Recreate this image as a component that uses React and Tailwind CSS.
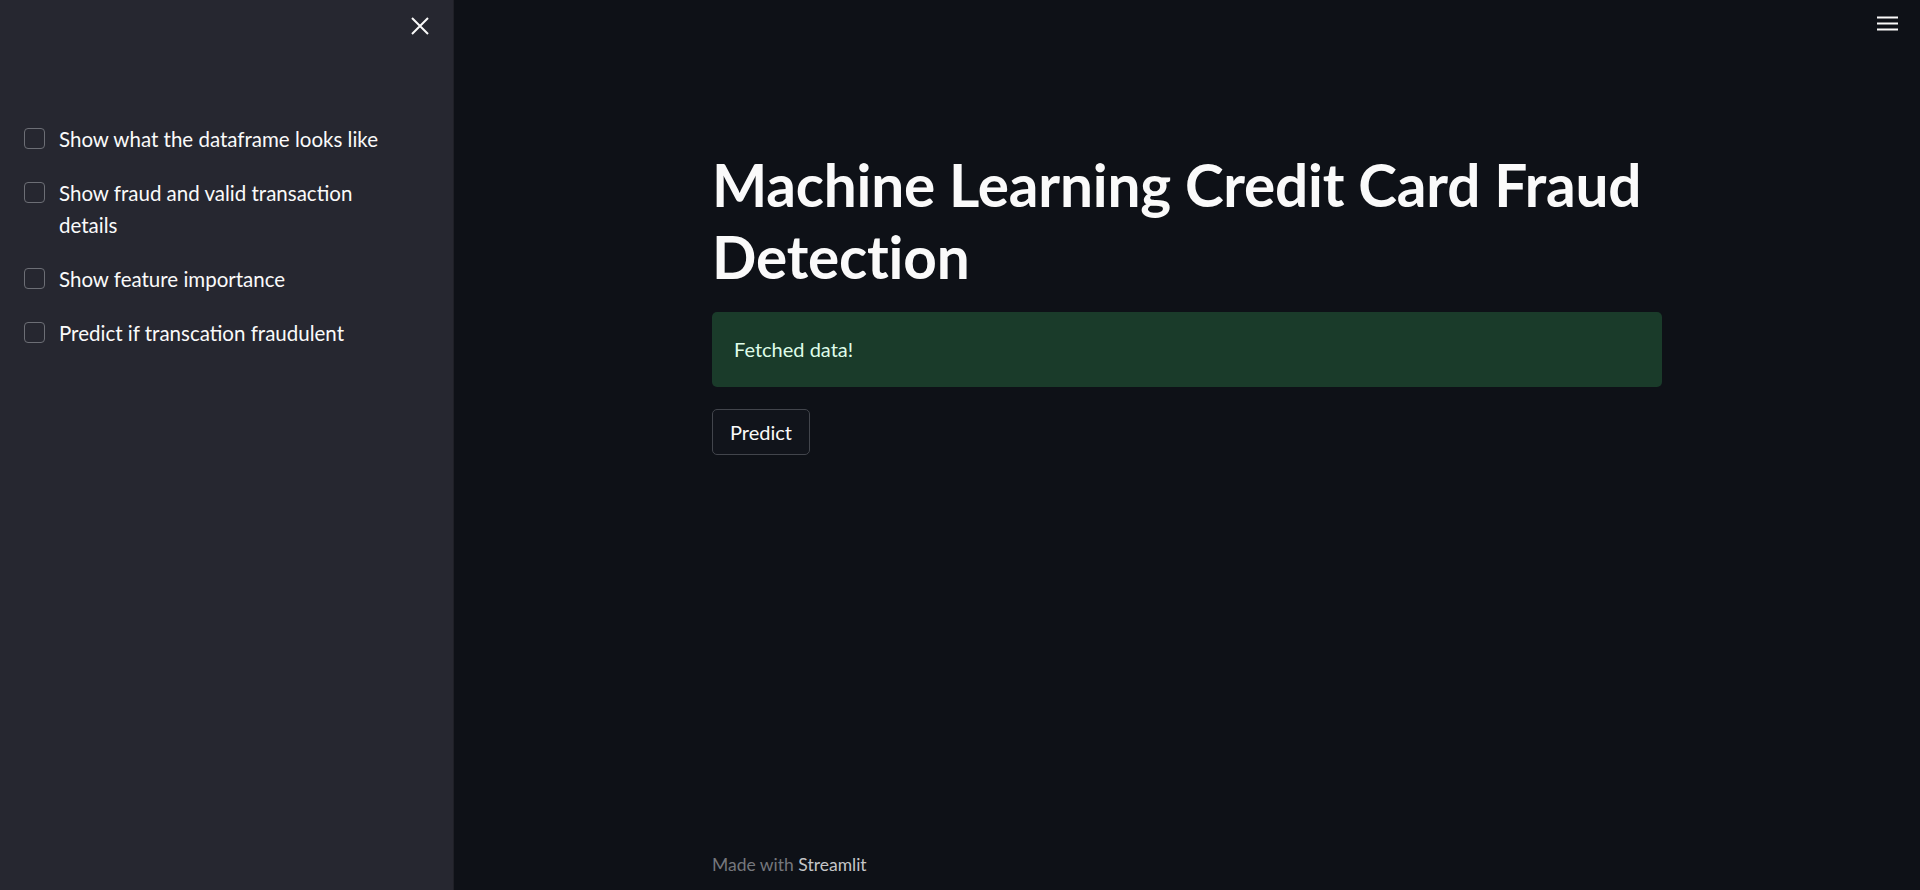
const options = [
  'Show what the dataframe looks like',
  'Show fraud and valid transaction details',
  'Show feature importance',
  'Predict if transcation fraudulent',
];

const Checkbox = ({ label }) => (
  <label className="flex items-start gap-[14px] cursor-pointer">
    <span className="mt-[5px] h-[21px] w-[21px] shrink-0 rounded-[4px] border-[1.5px] border-[#6c6e75] bg-[#262730]" />
    <span className="text-[20.5px] leading-[32px] text-[#fafafa]">{label}</span>
  </label>
);

const App = () => {
  return (
    <div
      className="flex h-[890px] w-full overflow-hidden bg-[#0e1117]"
      style={{ fontFamily: 'Lato, "Noto Sans", sans-serif' }}
    >
      <aside className="flex w-[454px] shrink-0 flex-col bg-[#262730] border-r border-[#1f2027]">
        <div className="flex justify-end pr-[24px] pt-[17px]">
          <button className="text-[#fafafa]">
            <svg width="18" height="18" viewBox="0 0 18 18" fill="none" stroke="currentColor" strokeWidth="2">
              <path d="M1 1L17 17M17 1L1 17" />
            </svg>
          </button>
        </div>
        <div className="flex flex-col gap-[22px] pl-[24px] pr-[60px] pt-[88px]">
          {options.map((o) => (
            <Checkbox key={o} label={o} />
          ))}
        </div>
      </aside>

      <main className="relative flex flex-1 flex-col">
        <button className="absolute right-[22px] top-[14px] text-[#fafafa]">
          <svg width="21" height="18" viewBox="0 0 21 18" fill="currentColor">
            <rect x="0" y="2.5" width="21" height="2" />
            <rect x="0" y="8.5" width="21" height="2" />
            <rect x="0" y="14.5" width="21" height="2" />
          </svg>
        </button>
        <div className="mx-auto flex w-[950px] flex-1 flex-col pt-[148px]">
          <h1 className="text-[58.5px] font-bold leading-[72px] tracking-[-0.2px] text-[#fafafa]">
            Machine Learning Credit Card Fraud Detection
          </h1>
          <div className="mt-[20px] flex h-[75px] items-center rounded-[5px] bg-[#1a3b2a] px-[22px] pb-[2px] text-[20px] text-[#dffde9]">
            Fetched data!
          </div>
          <div className="mt-[22px]">
            <button className="h-[46px] rounded-[5px] border border-[#42454c] bg-[#11141b] px-[17px] text-[20px] text-[#fafafa]">
              Predict
            </button>
          </div>
          <div className="mt-auto pb-[12px] text-[17.5px] text-[#75777c]">
            Made with <span className="text-[#c5c6c8]">Streamlit</span>
          </div>
        </div>
      </main>
    </div>
  );
};

export default App;
